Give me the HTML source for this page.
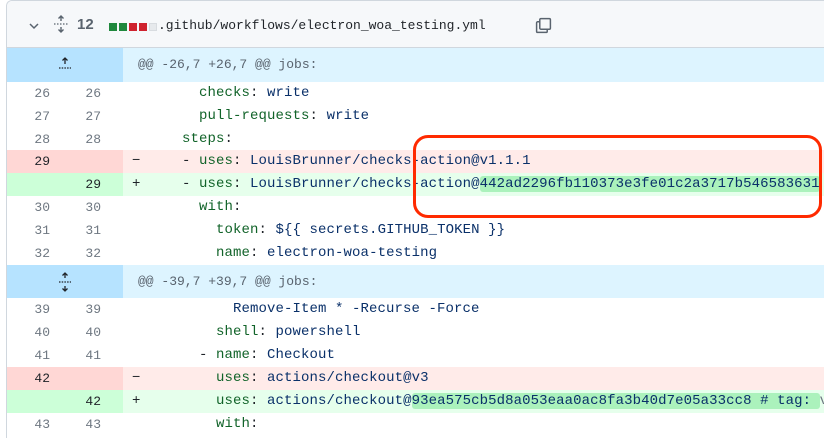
<!DOCTYPE html>
<html><head><meta charset="utf-8"><style>
*{margin:0;padding:0;box-sizing:border-box}
html,body{width:824px;height:438px;overflow:hidden}
body{background:#fff;position:relative;font-family:"Liberation Mono",monospace}
.box{position:absolute;left:6px;top:0;width:818px;height:438px;border:1px solid #d0d7de;border-right:none;border-bottom:none;border-radius:6px 0 0 0;overflow:hidden}
.hdr{position:absolute;left:0;top:0;width:100%;height:47px;background:#f6f8fa;border-bottom:1px solid #d0d7de}
.row{position:absolute;left:0;width:100%;height:23px;font-size:14px;line-height:23px;color:#1f2328}
.g1,.g2{position:absolute;top:0;height:100%;text-align:right;color:#6e7781;font-size:13px}
.g1{left:0;width:43px}
.g2{left:0;width:116px;padding-right:22px}
.gut{position:absolute;left:0;top:0;width:116px;height:100%}
.sign{position:absolute;left:125px;top:0}
.code{position:absolute;left:141px;top:0;white-space:pre;letter-spacing:0.1px}
.k{color:#116329}.v{color:#0a3069}
.del .gut{background:#ffd7d5}.del{background:#ffebe9}
.add .gut{background:#ccffd8}.add{background:#e6ffec}
.hl{background:#abf2bc;border-radius:3px}
.hunk{position:absolute;left:0;width:100%;background:#ddf4ff;color:#59636e;font-size:13px}
.hunk .gut{background:#b6e3ff}
</style></head><body>
<div class="box">
<div class="hdr">
<svg style="position:absolute;left:21px;top:19px" width="12" height="12" viewBox="0 0 12 12"><path d="M2 4l4 4 4-4" fill="none" stroke="#59636e" stroke-width="1.5"/></svg>
<svg style="position:absolute;left:46px;top:14px" width="16" height="18" viewBox="0 0 16 18"><path d="M8 1v5M5.5 3.5L8 1l2.5 2.5M8 17v-5M5.5 14.5L8 17l2.5-2.5" fill="none" stroke="#59636e" stroke-width="1.4"/><path d="M1 9h14" stroke="#59636e" stroke-width="1.3" stroke-dasharray="1.5 1.5"/></svg>
<div style="position:absolute;left:70px;top:15px;font:bold 15px 'Liberation Sans',sans-serif;color:#59636e">12</div>
<div style="position:absolute;left:102px;top:22px;width:8px;height:8px;background:#1f883d"></div>
<div style="position:absolute;left:112px;top:22px;width:8px;height:8px;background:#1f883d"></div>
<div style="position:absolute;left:122px;top:22px;width:8px;height:8px;background:#cf222e"></div>
<div style="position:absolute;left:132px;top:22px;width:8px;height:8px;background:#cf222e"></div>
<div style="position:absolute;left:142px;top:22px;width:8px;height:8px;background:#e6e9ec;border:1px solid #d8dce0"></div>
<div style="position:absolute;left:151px;top:17px;font-size:13px;color:#1f2328">.github/workflows/electron_woa_testing.yml</div>
<svg style="position:absolute;left:528px;top:16px" width="17" height="17" viewBox="0 0 16 16"><path d="M5.5 1.5h8a1 1 0 0 1 1 1v8a1 1 0 0 1-1 1h-8a1 1 0 0 1-1-1v-8a1 1 0 0 1 1-1zM4.5 4.5h-2a1 1 0 0 0-1 1v8a1 1 0 0 0 1 1h8a1 1 0 0 0 1-1v-2" fill="none" stroke="#59636e" stroke-width="1.4"/></svg>
</div>

<div class="hunk" style="top:47px;height:34px;line-height:34px"><div class="gut"></div>
<svg style="position:absolute;left:50px;top:9px" width="16" height="14" viewBox="0 0 16 14"><path d="M8 1v6M5.5 3.5L8 1l2.5 2.5" fill="none" stroke="#1f2328" stroke-width="1.3"/><path d="M2 11h12" stroke="#1f2328" stroke-width="1.2" stroke-dasharray="1.5 1.2"/></svg>
<div style="position:absolute;left:131px">@@ -26,7 +26,7 @@ jobs:</div></div>

<div class="row" style="top:81px"><div class="g1">26</div><div class="g2">26</div><div class="code">      <span class="k">checks</span>: <span class="v">write</span></div></div>
<div class="row" style="top:104px"><div class="g1">27</div><div class="g2">27</div><div class="code">      <span class="k">pull-requests</span>: <span class="v">write</span></div></div>
<div class="row" style="top:127px"><div class="g1">28</div><div class="g2">28</div><div class="code">    <span class="k">steps</span>:</div></div>
<div class="row del" style="top:149px"><div class="gut"></div><div class="g1" style="color:#1f2328">29</div><div class="sign">−</div><div class="code">    - <span class="k">uses</span>: <span class="v">LouisBrunner/checks-action@v1.1.1</span></div></div>
<div class="row add" style="top:172px"><div class="gut"></div><div class="g2" style="color:#1f2328">29</div><div class="sign">+</div><div class="code">    - <span class="k">uses</span>: <span class="v">LouisBrunner/checks-action@<span class="hl">442ad2296fb110373e3fe01c2a3717b546583631</span></span></div></div>
<div class="row" style="top:195px"><div class="g1">30</div><div class="g2">30</div><div class="code">      <span class="k">with</span>:</div></div>
<div class="row" style="top:218px"><div class="g1">31</div><div class="g2">31</div><div class="code">        <span class="k">token</span>: <span class="v">${{ secrets.GITHUB_TOKEN }}</span></div></div>
<div class="row" style="top:241px"><div class="g1">32</div><div class="g2">32</div><div class="code">        <span class="k">name</span>: <span class="v">electron-woa-testing</span></div></div>

<div class="hunk" style="top:264px;height:33px;line-height:33px"><div class="gut"></div>
<svg style="position:absolute;left:50px;top:7px" width="16" height="20" viewBox="0 0 16 20"><path d="M8 1v5M5.5 3.5L8 1l2.5 2.5M8 19v-5M5.5 16.5L8 19l2.5-2.5" fill="none" stroke="#1f2328" stroke-width="1.3"/><path d="M2 10h12" stroke="#1f2328" stroke-width="1.2" stroke-dasharray="1.5 1.2"/></svg>
<div style="position:absolute;left:131px">@@ -39,7 +39,7 @@ jobs:</div></div>

<div class="row" style="top:297px"><div class="g1">39</div><div class="g2">39</div><div class="code">          <span class="v">Remove-Item * -Recurse -Force</span></div></div>
<div class="row" style="top:320px"><div class="g1">40</div><div class="g2">40</div><div class="code">        <span class="k">shell</span>: <span class="v">powershell</span></div></div>
<div class="row" style="top:343px"><div class="g1">41</div><div class="g2">41</div><div class="code">      - <span class="k">name</span>: <span class="v">Checkout</span></div></div>
<div class="row del" style="top:366px"><div class="gut"></div><div class="g1" style="color:#1f2328">42</div><div class="sign">−</div><div class="code">        <span class="k">uses</span>: <span class="v">actions/checkout@v3</span></div></div>
<div class="row add" style="top:389px"><div class="gut"></div><div class="g2" style="color:#1f2328">42</div><div class="sign">+</div><div class="code">        <span class="k">uses</span>: <span class="v">actions/checkout@<span class="hl">93ea575cb5d8a053eaa0ac8fa3b40d7e05a33cc8 # tag: </span></span><span style="color:#6e7781">v3</span></div></div>
<div class="row" style="top:412px"><div class="g1">43</div><div class="g2">43</div><div class="code">        <span class="k">with</span>:</div></div>
</div>
<div style="position:absolute;left:413px;top:135px;width:409px;height:83px;border:3px solid #ff2a00;border-radius:15px"></div>
</body></html>
